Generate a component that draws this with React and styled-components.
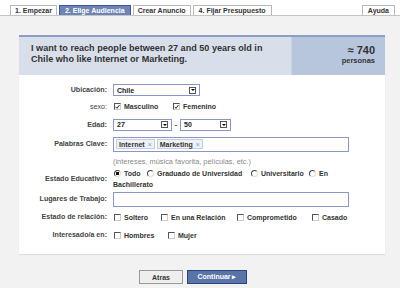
import React from 'react';
import styled, { createGlobalStyle } from 'styled-components';

const Global = createGlobalStyle`
  html, body {
    margin: 0;
    padding: 0;
    background: #f2f2f2;
  }
  body {
    font-family: "Liberation Sans", Arial, sans-serif;
    color: #333;
  }
`;

const Page = styled.div`
  width: 400px;
  height: 288px;
  overflow: hidden;
  display: flex;
  flex-direction: column;
`;

const TabBar = styled.div`
  background: #fff;
  height: 12px;
  padding-top: 3px;
  border-bottom: 1px solid #c4c4c4;
  display: flex;
  align-items: flex-end;
  padding-left: 10px;
  padding-right: 3px;
  box-sizing: content-box;
`;

const Tab = styled.div`
  height: 10px;
  padding: 0 ${(p) => p.pad || 4}px;
  margin-right: 2px;
  box-sizing: border-box;
  border: 1px solid ${(p) => (p.active ? '#3b5998' : '#b8b8b8')};
  border-bottom: none;
  background: ${(p) => (p.active ? '#6d84b4' : '#fff')};
  color: ${(p) => (p.active ? '#fff' : '#333')};
  font-size: 7px;
  font-weight: bold;
  line-height: 9px;
  white-space: nowrap;
`;

const Spacer = styled.div`
  flex: 1;
`;

const Body = styled.div`
  flex: 1;
  padding: 19px 15px 0 19px;
`;

const Panel = styled.div`
  background: #fff;
  border-top: 2px solid #8d9fc5;
  box-shadow: 0 1px 1px rgba(0, 0, 0, 0.08);
  width: 366px;
  padding-bottom: 10px;
`;

const Summary = styled.div`
  display: flex;
  height: 38px;
  background: #d8dfea;
`;

const SummaryText = styled.div`
  flex: 1;
  padding: 6px 0 0 12px;
  font-size: 9.1px;
  font-weight: bold;
  line-height: 11px;
  color: #333;
`;

const CountBox = styled.div`
  width: 94px;
  background: #b8c6dd;
  border-left: 1px solid #c8d2e3;
  text-align: right;
  padding: 7px 10px 0 0;
  box-sizing: border-box;
  font-weight: bold;
  color: #333;
`;

const Count = styled.div`
  font-size: 11px;
  line-height: 12px;
`;

const CountUnit = styled.div`
  font-size: 7.5px;
  line-height: 10px;
`;

const Form = styled.div`
  padding-top: 7px;
`;

const Row = styled.div`
  display: grid;
  grid-template-columns: 88px 1fr;
  column-gap: 6px;
  align-items: center;
  height: ${(p) => p.h}px;
`;

const Label = styled.div`
  text-align: right;
  font-size: 7.1px;
  font-weight: ${(p) => (p.light ? 'normal' : 'bold')};
  color: #444;
  white-space: nowrap;
`;

const Controls = styled.div`
  display: flex;
  align-items: center;
`;

const SelectBox = styled.div`
  width: ${(p) => p.w}px;
  height: 12px;
  box-sizing: border-box;
  border: 1px solid #8a98c0;
  display: flex;
  align-items: center;
  padding-left: 3px;
  font-size: 7px;
  font-weight: bold;
  color: #222;
`;

const SelectValue = styled.span`
  flex: 1;
`;

const Arrow = styled.span`
  width: 7px;
  height: 7px;
  margin-right: 3px;
  border: 1px solid #555;
  box-sizing: border-box;
  display: flex;
  align-items: center;
  justify-content: center;
  background: #fff;
  &::after {
    content: '';
    border-left: 2px solid transparent;
    border-right: 2px solid transparent;
    border-top: 2.5px solid #000;
  }
`;

const Dash = styled.span`
  width: 8px;
  text-align: center;
  font-size: 7px;
  font-weight: bold;
`;

const Option = styled.div`
  display: flex;
  align-items: center;
  flex: none;
  width: ${(p) => (p.w ? `${p.w}px` : 'auto')};
  font-size: 7px;
  font-weight: bold;
  color: #333;
  white-space: nowrap;
`;

const Box = styled.span`
  width: 7px;
  height: 7px;
  flex: none;
  box-sizing: border-box;
  margin: 0 3px 0 1px;
  border-top: 1px solid #555;
  border-left: 1px solid #555;
  border-right: 1px solid #ccc;
  border-bottom: 1px solid #ccc;
  background: #fff;
  display: flex;
  align-items: center;
  justify-content: center;
`;

const Radio = styled.span`
  width: 7px;
  height: 7px;
  flex: none;
  box-sizing: border-box;
  margin: 0 3px 0 1px;
  border-radius: 50%;
  border-top: 1px solid #444;
  border-left: 1px solid #444;
  border-right: 1px solid #ddd;
  border-bottom: 1px solid #ddd;
  background: ${(p) =>
    p.on ? 'radial-gradient(circle, #111 0 1.5px, #fff 2px)' : '#fff'};
`;

const TextInput = styled.div`
  width: 236px;
  height: ${(p) => p.h}px;
  box-sizing: border-box;
  border: 1px solid #8a98c0;
  display: flex;
  align-items: center;
  padding-left: 2px;
  gap: 2px;
`;

const Token = styled.span`
  height: 10px;
  box-sizing: border-box;
  border: 1px solid #c3cde0;
  background: #eef1f7;
  padding: 0 2px;
  display: inline-flex;
  align-items: center;
  gap: 3px;
  font-size: 7px;
  font-weight: bold;
  color: #333;
`;

const TokenX = styled.span`
  color: #8a98c0;
  font-weight: normal;
  font-size: 7px;
`;

const Hint = styled.div`
  grid-column: 2;
  font-size: 7.4px;
  color: #888;
`;

const Stack = styled.div`
  display: flex;
  flex-direction: column;
  gap: 4px;
`;

const Wrapped = styled.div`
  font-size: 7px;
  font-weight: bold;
  color: #333;
`;

const Footer = styled.div`
  display: flex;
  gap: 4px;
  padding: 16px 0 0 120px;
`;

const Button = styled.div`
  height: 14px;
  width: ${(p) => p.w}px;
  box-sizing: border-box;
  border: 1px solid ${(p) => (p.primary ? '#29447e' : '#999')};
  background: ${(p) => (p.primary ? '#5b74a8' : '#eee')};
  color: ${(p) => (p.primary ? '#fff' : '#333')};
  font-size: 7px;
  font-weight: bold;
  display: flex;
  align-items: center;
  justify-content: center;
`;

const Check = () => (
  <svg width="6" height="6" viewBox="0 0 6 6">
    <path d="M0.8 2.8 L2.4 4.6 L5.4 0.6" fill="none" stroke="#111" strokeWidth="1.1" />
  </svg>
);

const CheckOpt = ({ w, on, children }) => (
  <Option w={w}>
    <Box>{on && <Check />}</Box>
    {children}
  </Option>
);

const RadioOpt = ({ w, on, children }) => (
  <Option w={w}>
    <Radio on={on} />
    {children}
  </Option>
);

const App = () => (
  <Page>
    <Global />
    <TabBar>
      <Tab>1. Empezar</Tab>
      <Tab active pad={5}>2. Elige Audiencia</Tab>
      <Tab>Crear Anuncio</Tab>
      <Tab pad={5}>4. Fijar Presupuesto</Tab>
      <Spacer />
      <Tab pad={5}>Ayuda</Tab>
    </TabBar>
    <Body>
      <Panel>
        <Summary>
          <SummaryText>
            I want to reach people between 27 and 50 years old in
            <br />
            Chile who like Internet or Marketing.
          </SummaryText>
          <CountBox>
            <Count>≈ 740</Count>
            <CountUnit>personas</CountUnit>
          </CountBox>
        </Summary>
        <Form>
          <Row h={16}>
            <Label>Ubicación:</Label>
            <Controls>
              <SelectBox w={87}>
                <SelectValue>Chile</SelectValue>
                <Arrow />
              </SelectBox>
            </Controls>
          </Row>
          <Row h={17}>
            <Label light>sexo:</Label>
            <Controls>
              <CheckOpt w={59} on>Masculino</CheckOpt>
              <CheckOpt on>Femenino</CheckOpt>
            </Controls>
          </Row>
          <Row h={19}>
            <Label>Edad:</Label>
            <Controls>
              <SelectBox w={59}>
                <SelectValue>27</SelectValue>
                <Arrow />
              </SelectBox>
              <Dash>-</Dash>
              <SelectBox w={51}>
                <SelectValue>50</SelectValue>
                <Arrow />
              </SelectBox>
            </Controls>
          </Row>
          <Row h={20}>
            <Label>Palabras Clave:</Label>
            <Controls>
              <TextInput h={15}>
                <Token>
                  Internet<TokenX>×</TokenX>
                </Token>
                <Token>
                  Marketing<TokenX>×</TokenX>
                </Token>
              </TextInput>
            </Controls>
          </Row>
          <Row h={14}>
            <Hint>(intereses, música favorita, películas, etc.)</Hint>
          </Row>
          <Row h={22}>
            <Label>Estado Educativo:</Label>
            <Stack>
              <Controls>
                <RadioOpt w={33} on>Todo</RadioOpt>
                <RadioOpt w={104}>Graduado de Universidad</RadioOpt>
                <RadioOpt w={58}>Universitario</RadioOpt>
                <RadioOpt>En</RadioOpt>
              </Controls>
              <Wrapped>Bachillerato</Wrapped>
            </Stack>
          </Row>
          <Row h={18}>
            <Label>Lugares de Trabajo:</Label>
            <Controls>
              <TextInput h={15} />
            </Controls>
          </Row>
          <Row h={18}>
            <Label>Estado de relación:</Label>
            <Controls>
              <CheckOpt w={47}>Soltero</CheckOpt>
              <CheckOpt w={76}>En una Relación</CheckOpt>
              <CheckOpt w={75}>Comprometido</CheckOpt>
              <CheckOpt>Casado</CheckOpt>
            </Controls>
          </Row>
          <Row h={18}>
            <Label>Interesado/a en:</Label>
            <Controls>
              <CheckOpt w={54}>Hombres</CheckOpt>
              <CheckOpt>Mujer</CheckOpt>
            </Controls>
          </Row>
        </Form>
      </Panel>
      <Footer>
        <Button w={44}>Atras</Button>
        <Button primary w={60}>Continuar ▸</Button>
      </Footer>
    </Body>
  </Page>
);

export default App;
